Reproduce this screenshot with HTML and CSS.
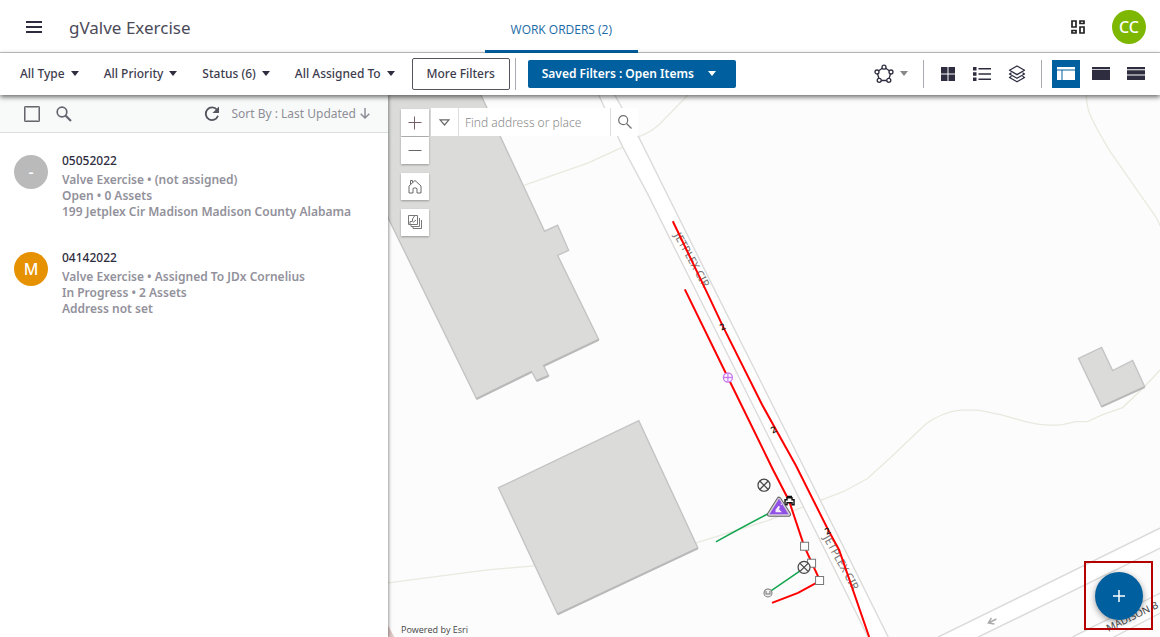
FILE: index.html
```html
<!DOCTYPE html>
<html lang="en">
<head>
<meta charset="utf-8">
<title>gValve Exercise</title>
<link rel="stylesheet" href="styles.css">
</head>
<body>
<div class="app">
  <header class="topbar">
    <button class="icon-btn menu" aria-label="Menu"><svg width="16" height="12" viewBox="0 0 16 12"><path d="M0 1h16M0 6h16M0 11h16" stroke="#2e2d40" stroke-width="2"/></svg></button>
    <h1 class="title">gValve Exercise</h1>
    <nav class="tabs"><a class="tab" href="#">WORK ORDERS (2)</a></nav>
    <button class="icon-btn" aria-label="Dashboard"><svg width="14" height="14" viewBox="0 0 14 14" fill="none" stroke="#222" stroke-width="1.700"><path d="M1 1h4v6H1zM9 1h4v2.500H9zM1 10.500h4V13H1zM9 7h4v6H9z"/></svg></button>
    <button class="avatar user">CC</button>
  </header>

  <div class="toolbar">
    <div class="filters">
      <button class="filter">All Type<span class="caret"></span></button>
      <button class="filter">All Priority<span class="caret"></span></button>
      <button class="filter">Status (6)<span class="caret"></span></button>
      <button class="filter">All Assigned To<span class="caret"></span></button>
    </div>
    <button class="more">More Filters</button>
    <span class="rule"></span>
    <button class="saved">Saved Filters : Open Items<span class="caret"></span></button>
    <div class="tools">
      <button class="icon-btn polygon" aria-label="Select area"><svg width="20" height="20" viewBox="0 0 20 20" fill="#fff" stroke="#2e2d40" stroke-width="1.300"><path d="M10 3L17 8L14.500 16.500H5.500L3 8Z"/><circle cx="10" cy="3.200" r="2"/><circle cx="17" cy="8" r="2"/><circle cx="14.800" cy="16.300" r="2"/><circle cx="5.200" cy="16.300" r="2"/><circle cx="3" cy="8" r="2"/></svg><span class="caret muted"></span></button>
      <span class="rule"></span>
      <div class="views">
        <button class="icon-btn" aria-label="Grid"><svg width="14" height="14" viewBox="0 0 14 14" fill="#2e2d40"><path d="M0 0h6.500v6.500H0zM7.500 0H14v6.500H7.500zM0 7.500h6.500V14H0zM7.500 7.500H14V14H7.500z"/></svg></button>
        <button class="icon-btn" aria-label="List"><svg width="18" height="14" viewBox="0 0 18 14" fill="#2e2d40"><path d="M0 0h3.500v3.500H0zM0 5.200h3.500v3.500H0zM0 10.500h3.500V14H0zM5.500 1H18v1.600H5.500zM5.500 6.200H18v1.600H5.500zM5.500 11.500H18v1.600H5.500z"/></svg></button>
        <button class="icon-btn" aria-label="Layers"><svg width="18" height="18" viewBox="0 0 18 18" fill="#fff" stroke="#2e2d40" stroke-width="1.300" stroke-linejoin="round"><path d="M3.500 11.300L1.500 12.500L9 16.800L16.500 12.500L14.500 11.300"/><path d="M3.500 7.800L1.500 9L9 13.300L16.500 9L14.500 7.800"/><path d="M9 1L16.500 5.300L9 9.600L1.500 5.300Z"/></svg></button>
      </div>
      <span class="rule"></span>
      <div class="layouts">
        <button class="icon-btn active" aria-label="Split layout"><svg width="18" height="13" viewBox="0 0 18 13" fill="#fff"><path d="M0 0h18v2.500H0zM0 3.500h4.500V13H0zM5.500 3.500H18V13H5.500z"/></svg></button>
        <button class="icon-btn" aria-label="Map layout"><svg width="18" height="13" viewBox="0 0 18 13" fill="#2e2d40"><path d="M0 0h18v2.200H0zM0 3h18v10H0z"/></svg></button>
        <button class="icon-btn" aria-label="Table layout"><svg width="18" height="13" viewBox="0 0 18 13" fill="#2e2d40"><path d="M0 0h18v2.200H0zM0 3.200h18V7.500H0zM0 8.600h18V13H0z"/></svg></button>
      </div>
    </div>
  </div>

  <main class="content">
    <section class="panel">
      <div class="panel-head">
        <input class="check" type="checkbox" aria-label="Select all">
        <button class="icon-btn" aria-label="Search"><svg width="16" height="16" viewBox="0 0 16 16" fill="none" stroke="#66656f"><circle cx="6" cy="6" r="4.800" stroke-width="1.700"/><path d="M9.500 9.500L15 15" stroke-width="2.200"/></svg></button>
        <button class="icon-btn refresh" aria-label="Refresh"><svg width="16" height="16" viewBox="0 0 16 16"><path d="M13 3.800A6.300 6.300 0 1 0 14 9.800" fill="none" stroke="#55545f" stroke-width="1.800"/><path d="M15 .5V7H8.500Z" fill="#55545f"/></svg></button>
        <button class="sort">Sort By : Last Updated<svg width="10" height="11" viewBox="0 0 10 11" fill="none" stroke="#8e8d98" stroke-width="1.500"><path d="M5 0V10M.7 5.700L5 10L9.300 5.700"/></svg></button>
      </div>
      <ul class="list">
        <li class="item">
          <span class="avatar none">-</span>
          <div class="body"><h2>05052022</h2><p>Valve Exercise • (not assigned)</p><p>Open • 0 Assets</p><p>199 Jetplex Cir Madison Madison County Alabama</p></div>
        </li>
        <li class="item">
          <span class="avatar orange">M</span>
          <div class="body"><h2>04142022</h2><p>Valve Exercise • Assigned To JDx Cornelius</p><p>In Progress • 2 Assets</p><p>Address not set</p></div>
        </li>
      </ul>
    </section>

    <section class="map">
      <svg class="canvas" viewBox="388 96 772 541" preserveAspectRatio="xMidYMid slice">
        <g fill="none" stroke="#e9e9df" stroke-width="1.300">
          <path d="M525 186L588 164L623 148M638 138Q650 134 660 125L690 94"/>
          <path d="M1085.500 94Q1086 108 1090 117Q1098 134 1110 153L1156 219L1161 230"/>
          <path d="M388 583L488 570L535 566M690 545L767 521L843 492L867 479L888 460L925 425Q940 413 960 410.500H978L1000 415L1025 422Q1045 427 1062 425L1075 422H1087L1102 415L1122 408L1143 388L1160 370"/>
        </g>
        <g class="building">
          <path d="M380 80H474L545 232L558 226L569 251L558 256L599 340L544 366L549 376L537 381L532 372L477 399L388 217L370 180Z"/>
          <path d="M499 488L639 421L698 548L558 614Z"/>
          <path d="M1078 359L1101 348L1112 371L1132 361L1144 387L1101 407Z"/>
        </g>
        <path class="building-edge" d="M599 340.500L544 366.500M549 376.500L537 381.500M532 372.500L477 399.500M698 548.500L558 614.500M1144 387.500L1101 407"/>
        <path d="M388 624L395 637H388Z" fill="#dfc8c6"/>
        <path d="M599 96L623 148L648 195L785 470L868 637H888L805 470L717 295L640 140L615 96Z" fill="#fff"/>
        <path d="M938 637L1160 528V548L978 637ZM1072 637L1160 593V613L1113 637Z" fill="#fff"/>
        <g fill="none" stroke="#dcdbda" stroke-width="1.400">
          <path d="M599 96L623 148L648 195L785 470L868 637"/>
          <path d="M615 96L640 140L717 295L805 470L888 637"/>
          <path d="M938 637L1160 528M978 637L1160 548M1072 637L1160 593M1113 637L1160 613"/>
        </g>
        <path d="M996 619L988 623M991 618L988 623L994 624" fill="none" stroke="#aaa" stroke-width="1.500"/>
        <g class="roads">
          <text transform="translate(674 236) rotate(61)">JETPLEX CIR</text>
          <text transform="translate(823 538) rotate(61)">JETPLEX CIR</text>
          <text class="major" transform="translate(1108 632) rotate(-26)">MADISON B</text>
        </g>
        <g fill="none" stroke="#ff0000" stroke-width="2">
          <path d="M673 222L708 295L723 327L762 405L796 466L828 530L839 550L869 637"/>
          <path d="M685 290L728 378L773 470L789 501L804 546L820 581L798 593L772 603"/>
        </g>
        <path d="M716 542Q745 526 770 513M768 593L803 569" fill="none" stroke="#13a44f" stroke-width="1.500"/>
        <g class="sizes">
          <text transform="translate(724 330) rotate(-28)">2</text>
          <text transform="translate(775 433) rotate(-28)">2</text>
          <text transform="translate(829 534) rotate(-28)">2</text>
        </g>
        <g fill="#fff" stroke="#c77af0" stroke-width="1.300"><circle cx="728" cy="378" r="4.500"/><path d="M728 374v8M724 378h8"/></g>
        <g fill="#fff" stroke="#777"><path d="M800.500 542.500h8v8h-8zM807.500 559.500h8v8h-8zM815.500 576.500h8v8h-8z"/></g>
        <g fill="#f5f5f5" stroke="#444" stroke-width="1.200"><circle cx="764" cy="485.500" r="6"/><path d="M760 481.500l8 8M768 481.500l-8 8"/><circle cx="804" cy="567.500" r="6"/><path d="M800 563.500l8 8M808 563.500l-8 8"/></g>
        <g fill="#eee" stroke="#777"><circle cx="768" cy="593" r="4"/><path d="M766 591v3h4v-3" fill="none"/></g>
        <path d="M785 505v-5h2v-2h5v2h2v5h-2v-2h-5v2z" fill="#fff" stroke="#111" stroke-width="1.400"/><path d="M787 497h5" stroke="#111" stroke-width="2"/>
        <path d="M779 499.500L788.500 514.500H769.500Z" fill="#aaa" stroke="#666" stroke-width="5" stroke-linejoin="round"/>
        <path d="M779 499.500L788.500 514.500H769.500Z" fill="#aaa" stroke="#d5d2da" stroke-width="3" stroke-linejoin="round"/>
        <path d="M779 499L788.500 514.500H769.500Z" fill="#9150e6"/>
        <path d="M775.500 512.500v-2.500l3-4 1.500 1-1 2.500 3 3zM780 504h2v1.500z" fill="#f3eaff"/>
      </svg>

      <div class="controls">
        <div class="zoom">
          <button class="ctl" aria-label="Zoom in"><svg width="14" height="14" viewBox="0 0 14 14"><path d="M.5 6.500h13M6.500 .5v13" stroke="#77606a"/></svg></button>
          <button class="ctl" aria-label="Zoom out"><svg width="14" height="14" viewBox="0 0 14 14"><path d="M.5 6.500h13" stroke="#666"/></svg></button>
        </div>
        <button class="ctl" aria-label="Home"><svg width="14" height="15" viewBox="0 0 14 15" fill="none" stroke="#6a6a6a"><path d="M1 7L7 1.500L13 7V14H9V9.500Q7 8 5 9.500V14H1ZM2.500 5.500V1.500H4.500V3.500"/></svg></button>
        <button class="ctl" aria-label="Basemap"><svg width="15" height="15" viewBox="0 0 15 15" fill="none" stroke="#777"><path d="M.5 .5h9v9h-9zM11.500 3v8.500H3V9.500M13.500 5v8.500H5V11.500M2 9V6.500H4.500V4L6.500 1M5 7.500L8 5"/></svg></button>
      </div>
      <form class="search">
        <button class="seg" type="button" aria-label="Search sources"><svg width="11" height="7" viewBox="0 0 11 7"><path d="M1 .8H10L5.500 6Z" fill="none" stroke="#666" stroke-width="1.200"/></svg></button>
        <input class="field" type="text" placeholder="Find address or place" aria-label="Find address or place">
        <button class="seg" type="button" aria-label="Search"><svg width="14" height="14" viewBox="0 0 14 14" fill="none" stroke="#707070" stroke-width="1.200"><circle cx="5.200" cy="5.200" r="4.500"/><path d="M8.500 8.500L13.500 13.500"/></svg></button>
      </form>
      <span class="credit">Powered by Esri</span>
      <div class="highlight"><button class="fab" aria-label="Add"><svg width="12" height="12" viewBox="0 0 12 12"><path d="M0 6h12M6 0v12" stroke="#fff" stroke-width="1.500"/></svg></button></div>
    </section>
  </main>
</div>
</body>
</html>
```
FILE: styles.css
```css
* { box-sizing: border-box; }
body { margin: 0; font-family: "Noto Sans", "Open Sans", sans-serif; font-size: 12px; color: #3d3c4e; background: #fff; }
button { font: inherit; color: inherit; background: none; border: 0; padding: 0; margin: 0; }
svg { display: block; }
h1, h2, p, ul { margin: 0; padding: 0; }
.app { display: flex; flex-direction: column; height: 100vh; }
.icon-btn { display: flex; align-items: center; justify-content: center; min-width: 16px; }

.topbar { display: flex; align-items: center; padding: 2px 14px 0 26px; min-height: 53px; border-bottom: 1px solid #c8c8c8; }
.title { margin-left: 27px; font-size: 17px; font-weight: 400; color: #4b4a59; }
.tabs { display: flex; flex: 1; align-self: stretch; margin: -2px 0 -1px 294px; }
.tab { display: flex; align-items: center; padding: 8px 26px 0; border-bottom: 3px solid #005f9f; color: #1a6ba6; font-family: "Open Sans", sans-serif; font-weight: 500; text-decoration: none; }
.avatar { display: flex; align-items: center; justify-content: center; width: 34px; height: 34px; border-radius: 50%; color: #fff; font-size: 16px; font-weight: 500; flex: none; }
.user { margin-left: 26px; background: #7db700; }

.toolbar { position: relative; z-index: 2; display: flex; align-items: center; min-height: 42px; padding: 0 10px 1px 20px; background: #fff; box-shadow: 0 2px 5px rgba(0, 0, 0, .6); }
.filters { display: flex; gap: 25px; }
.filter { display: flex; align-items: center; gap: 6px; font-weight: 500; }
.caret { border: 4px solid transparent; border-top: 5px solid #2e2d40; border-bottom: 0; }
.muted { border-top-color: #888; }
.more { margin-left: 17px; width: 98px; height: 32px; border: 1px solid #55545f; border-radius: 2px; font-weight: 500; }
.rule { width: 1px; height: 28px; background: #aaaab0; }
.more + .rule { margin-left: 5px; height: 32px; }
.saved { display: flex; align-items: center; gap: 14px; margin-left: 12px; padding: 0 20px 0 14px; height: 28px; border-radius: 2px; background: #005f9f; color: #fff; font-weight: 600; }
.saved .caret { border-top-color: #fff; }
.tools { display: flex; align-items: center; margin-left: auto; }
.polygon { gap: 6px; margin-right: 15px; }
.views { display: flex; gap: 17px; margin: 0 15px 0 16px; }
.layouts { display: flex; gap: 7px; margin-left: 10px; }
.layouts .icon-btn { width: 28px; height: 28px; }
.active { background: #005f9f; }

.content { display: flex; flex: 1; min-height: 0; }
.panel { position: relative; z-index: 1; flex: 0 0 388px; background: #fff; box-shadow: 1px 0 3px rgba(0, 0, 0, .4); }
.panel-head { display: flex; align-items: center; height: 38px; padding: 0 18px 0 24px; background: #f8faf9; border-bottom: 1px solid #dcdede; }
.check { appearance: none; width: 16px; height: 16px; margin: 0 16px 0 0; border: 1px solid #66656f; border-radius: 1px; outline: 1px solid #aaa; outline-offset: -2px; }
.refresh { margin-left: auto; margin-right: 11px; }
.sort { display: flex; align-items: center; gap: 4px; color: #8e8d98; }
.list { list-style: none; padding: 18px 14px; }
.item { display: flex; gap: 14px; min-height: 97px; }
.item .avatar { margin-top: 4px; }
.none { background: #bababa; }
.orange { background: #e69100; }
.item h2 { font-size: 12px; font-weight: 500; line-height: 20px; margin-bottom: 1px; color: #2e2d40; }
.item p { font-weight: 600; line-height: 16px; color: #92919b; }

.map { position: relative; flex: 1; min-width: 0; overflow: hidden; background: #fcfcfc; }
.canvas { width: 100%; height: 100%; }
.building { fill: #dbdbda; stroke: #c4c4c4; stroke-width: 1.4; }
.building-edge { fill: none; stroke: #b9b9b9; stroke-width: 2; }
.roads { font-size: 11px; fill: #777; }
.major { font-size: 10px; fill: #444; }
.sizes { font-size: 9px; font-weight: 600; fill: #222; text-anchor: middle; }
.controls { position: absolute; top: 14px; left: 13px; display: flex; flex-direction: column; gap: 9px; }
.zoom { display: flex; flex-direction: column; gap: 1px; }
.ctl { display: flex; align-items: center; justify-content: center; width: 28px; height: 27px; background: #fff; box-shadow: 0 1px 2px rgba(0, 0, 0, .3); }
.search { position: absolute; top: 13px; left: 43px; display: flex; height: 28px; background: #fff; }
.seg { display: flex; align-items: center; justify-content: center; width: 27px; }
.field { width: 153px; border: 1px solid #ddd; border-width: 0 1px; padding: 0 6px; font: 300 12px "Noto Sans", sans-serif; background: #fff; }
.field::placeholder { color: #8a8a8a; opacity: 1; }
.credit { position: absolute; left: 13px; bottom: 0; font: 9px/14px "Open Sans", sans-serif; color: #444; }
.highlight { position: absolute; right: 7px; bottom: 7px; display: grid; place-items: center; width: 69px; height: 69px; border: 2px solid #b50000; }
.fab { display: grid; place-items: center; width: 48px; height: 48px; border-radius: 50%; background: #005f9f; box-shadow: 0 2px 6px rgba(0, 0, 0, .4); }
```
